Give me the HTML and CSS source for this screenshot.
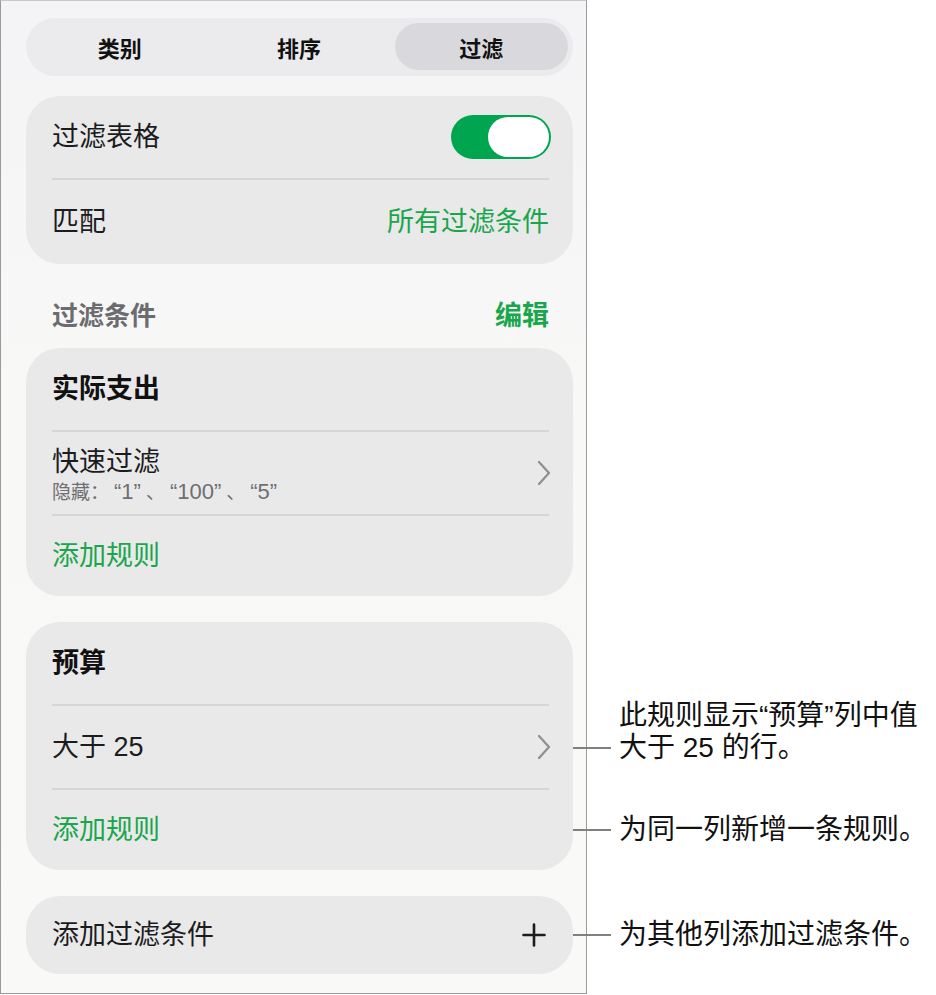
FILE: index.html
```html
<!DOCTYPE html>
<html lang="zh-CN">
<head>
<meta charset="utf-8">
<title>过滤</title>
<link rel="stylesheet" href="styles.css">
</head>
<body>
<div class="panel">
  <div class="segmented">
    <div class="seg">类别</div>
    <div class="seg">排序</div>
    <div class="seg seg-active">过滤</div>
  </div>

  <div class="card">
    <div class="row row-84">
      <div class="row-inner">
        <span class="label">过滤表格</span>
        <span class="toggle"><span class="knob"></span></span>
      </div>
    </div>
    <div class="row row-84">
      <div class="row-inner last">
        <span class="label">匹配</span>
        <span class="label green">所有过滤条件</span>
      </div>
    </div>
  </div>

  <div class="section-head">
    <span class="section-title">过滤条件</span>
    <span class="section-action">编辑</span>
  </div>

  <div class="card card-flush">
    <div class="row row-84">
      <div class="row-inner"><span class="label bold">实际支出</span></div>
    </div>
    <div class="row row-84">
      <div class="row-inner">
        <div class="stack">
          <span class="label">快速过滤</span>
          <span class="sub">隐藏：<span class="lat">“1”</span>、<span class="lat">“100”</span>、<span class="lat">“5”</span></span>
        </div>
        <svg class="chev" width="14" height="26" viewBox="0 0 14 26"><path d="M2 2 L12 13 L2 24" fill="none" stroke="#8e8e93" stroke-width="2.2" stroke-linecap="round" stroke-linejoin="round"/></svg>
      </div>
    </div>
    <div class="row row-80">
      <div class="row-inner last"><span class="label green">添加规则</span></div>
    </div>
  </div>

  <div class="card card-gap">
    <div class="row row-84">
      <div class="row-inner"><span class="label bold">预算</span></div>
    </div>
    <div class="row row-84">
      <div class="row-inner">
        <span class="label">大于 25</span>
        <svg class="chev" width="14" height="26" viewBox="0 0 14 26"><path d="M2 2 L12 13 L2 24" fill="none" stroke="#8e8e93" stroke-width="2.2" stroke-linecap="round" stroke-linejoin="round"/></svg>
      </div>
      <div class="callout">
        <span class="lead"></span>
        <span class="note">此规则显示“预算”列中值<br>大于 25 的行。</span>
      </div>
    </div>
    <div class="row row-80">
      <div class="row-inner last"><span class="label green">添加规则</span></div>
      <div class="callout">
        <span class="lead"></span>
        <span class="note">为同一列新增一条规则。</span>
      </div>
    </div>
  </div>

  <div class="card card-gap">
    <div class="row row-78">
      <div class="row-inner last">
        <span class="label">添加过滤条件</span>
        <svg class="plus" width="24" height="24" viewBox="0 0 24 24"><path d="M12 1.5 V22.5 M1.5 12 H22.5" fill="none" stroke="#1c1c1e" stroke-width="2.6" stroke-linecap="round"/></svg>
      </div>
      <div class="callout">
        <span class="lead"></span>
        <span class="note">为其他列添加过滤条件。</span>
      </div>
    </div>
  </div>
</div>
</body>
</html>
```

FILE: styles.css
```css
* { box-sizing: border-box; }

html, body {
  margin: 0;
  padding: 0;
  background: #ffffff;
}

body {
  width: 936px;
  height: 995px;
  font-family: "Liberation Sans", "Noto Sans CJK SC", sans-serif;
  color: #1c1c1e;
  overflow: hidden;
}

.panel {
  width: 587px;
  height: 994px;
  border: 1px solid #9a9a9a;
  border-top-color: #c8c8c8;
  background: linear-gradient(#f4f4f6, #f8f8f7 40%, #f9f9f8);
  padding: 17px 13px 0 25px;
}

.segmented {
  height: 58px;
  background: #ebebed;
  border-radius: 29px;
  padding: 5px 5px 6px 4px;
  display: grid;
  grid-template-columns: 1fr 1fr 1fr;
}

.seg {
  display: flex;
  align-items: center;
  justify-content: center;
  font-size: 22px;
  font-weight: 600;
  color: #111;
  border-radius: 24px;
}

.seg-active {
  background: #d9d9dd;
  margin-left: 6px;
}

.card {
  margin-top: 20px;
  background: #e9e9ea;
  border-radius: 34px;
}

.card-flush { margin-top: 0; }
.card-gap { margin-top: 26px; }

.row {
  position: relative;
  padding: 0 24px 0 26px;
}

.row-84 { height: 84px; }
.row-80 { height: 80px; }
.row-78 { height: 78px; }

.row-inner {
  height: 100%;
  display: flex;
  align-items: center;
  justify-content: space-between;
  border-bottom: 2px solid #d6d6d8;
}

.row-inner.last { border-bottom: none; }

.label {
  font-size: 27px;
  line-height: 32px;
  color: #1c1c1e;
  white-space: nowrap;
}

.label.bold { font-weight: 700; color: #111; }
.label.green { color: #1aa64c; }

.stack {
  display: flex;
  flex-direction: column;
  padding-top: 4px;
}

.sub {
  font-family: "Noto Sans CJK SC", "Liberation Sans", sans-serif;
  font-size: 19px;
  line-height: 26px;
  color: #6e6e73;
  white-space: nowrap;
}

.sub .lat {
  font-family: "Liberation Sans", "Noto Sans CJK SC", sans-serif;
  font-size: 22px;
  padding: 0 5px;
}

.chev { flex: none; margin-right: -2px; }
.plus { flex: none; margin-right: 3px; }

.toggle {
  width: 100px;
  height: 44px;
  border-radius: 22px;
  background: #00a64f;
  display: flex;
  align-items: center;
  justify-content: flex-end;
  padding: 0 2px;
  margin-right: -2px;
}

.knob {
  width: 61px;
  height: 40px;
  border-radius: 20px;
  background: #ffffff;
}

.section-head {
  height: 84px;
  padding: 36px 24px 0 26px;
  display: flex;
  justify-content: space-between;
  align-items: flex-start;
}

.section-title {
  font-size: 26px;
  line-height: 32px;
  font-weight: 600;
  color: #6c6c70;
}

.section-action {
  font-size: 27px;
  line-height: 32px;
  font-weight: 700;
  color: #1aa64c;
}

.callout {
  position: absolute;
  left: 100%;
  bottom: calc(50% - 16px);
  display: flex;
  align-items: flex-end;
}

.lead {
  flex: none;
  width: 38px;
  height: 32px;
  background: linear-gradient(#808080, #808080) center / 100% 2px no-repeat;
}

.note {
  margin-left: 8px;
  font-size: 28px;
  line-height: 32px;
  color: #111;
  white-space: nowrap;
}
```
